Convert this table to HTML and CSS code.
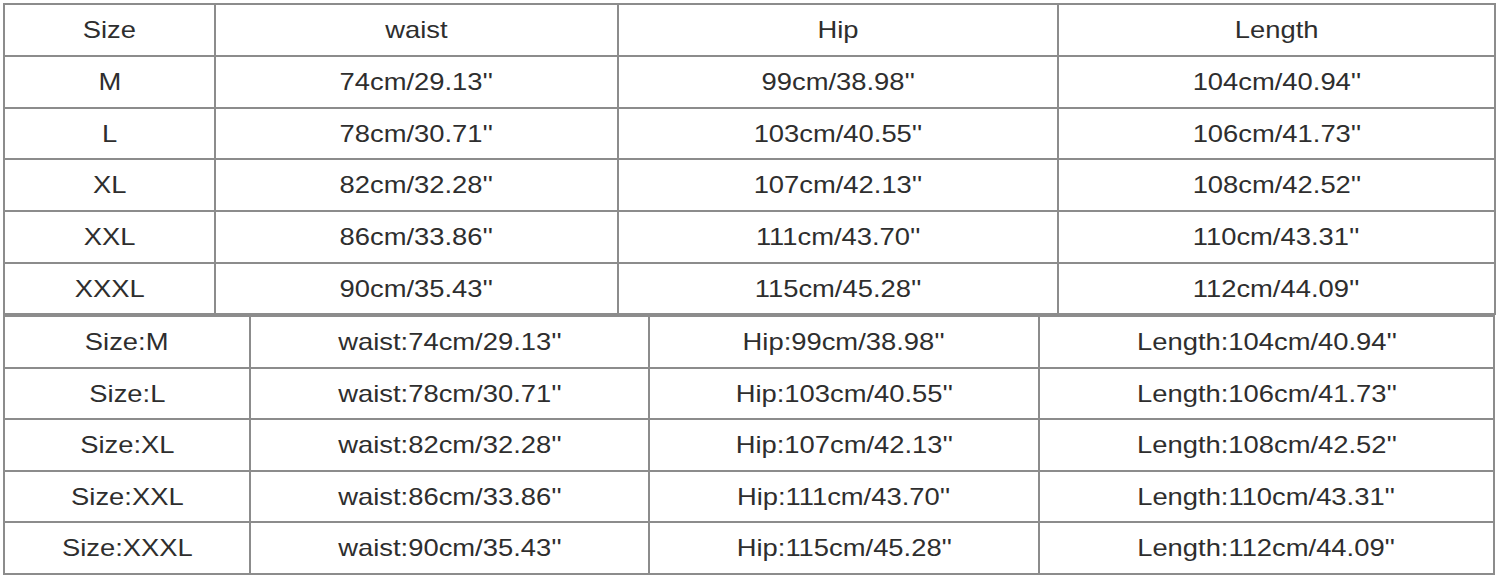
FILE: index.html
```html
<!DOCTYPE html>
<html>
<head>
<meta charset="utf-8">
<link rel="stylesheet" href="styles.css">
</head>
<body>
<div class="page">
  <div class="grid top">
    <div class="c"><span>Size</span></div><div class="c"><span>waist</span></div><div class="c"><span>Hip</span></div><div class="c"><span>Length</span></div>
    <div class="c"><span>M</span></div><div class="c"><span>74cm/29.13''</span></div><div class="c"><span>99cm/38.98''</span></div><div class="c"><span>104cm/40.94''</span></div>
    <div class="c"><span>L</span></div><div class="c"><span>78cm/30.71''</span></div><div class="c"><span>103cm/40.55''</span></div><div class="c"><span>106cm/41.73''</span></div>
    <div class="c"><span>XL</span></div><div class="c"><span>82cm/32.28''</span></div><div class="c"><span>107cm/42.13''</span></div><div class="c"><span>108cm/42.52''</span></div>
    <div class="c"><span>XXL</span></div><div class="c"><span>86cm/33.86''</span></div><div class="c"><span>111cm/43.70''</span></div><div class="c"><span>110cm/43.31''</span></div>
    <div class="c"><span>XXXL</span></div><div class="c"><span>90cm/35.43''</span></div><div class="c"><span>115cm/45.28''</span></div><div class="c"><span>112cm/44.09''</span></div>
  </div>
  <div class="grid bottom">
    <div class="c"><span>Size:M</span></div><div class="c"><span>waist:74cm/29.13''</span></div><div class="c"><span>Hip:99cm/38.98''</span></div><div class="c"><span>Length:104cm/40.94''</span></div>
    <div class="c"><span>Size:L</span></div><div class="c"><span>waist:78cm/30.71''</span></div><div class="c"><span>Hip:103cm/40.55''</span></div><div class="c"><span>Length:106cm/41.73''</span></div>
    <div class="c"><span>Size:XL</span></div><div class="c"><span>waist:82cm/32.28''</span></div><div class="c"><span>Hip:107cm/42.13''</span></div><div class="c"><span>Length:108cm/42.52''</span></div>
    <div class="c"><span>Size:XXL</span></div><div class="c"><span>waist:86cm/33.86''</span></div><div class="c"><span>Hip:111cm/43.70''</span></div><div class="c"><span>Length:110cm/43.31''</span></div>
    <div class="c"><span>Size:XXXL</span></div><div class="c"><span>waist:90cm/35.43''</span></div><div class="c"><span>Hip:115cm/45.28''</span></div><div class="c"><span>Length:112cm/44.09''</span></div>
  </div>
</div>
</body>
</html>
```
FILE: styles.css
```css
html, body {
  margin: 0;
  padding: 0;
  background: #ffffff;
}
.page {
  padding: 3px 0 0 3px;
  display: flex;
  flex-direction: column;
  align-items: flex-start;
}
.grid {
  display: grid;
  gap: 2px;
  padding: 2px;
  background: #8c8c8c;
}
.top {
  grid-template-columns: 209px 401px 438px 435px;
  grid-template-rows: 50px 50px 49px 50px 50px 49px;
}
.bottom {
  grid-template-columns: 244px 397px 388px 453px;
  grid-template-rows: 50px 49px 50px 49px 50px;
}
.c {
  background: #ffffff;
  display: flex;
  align-items: center;
  justify-content: center;
  font-family: "Liberation Sans", Arial, sans-serif;
  font-size: 24px;
  color: #2e2e2e;
  white-space: nowrap;
}
.c span {
  display: inline-block;
  transform: scaleX(1.14);
}
```
